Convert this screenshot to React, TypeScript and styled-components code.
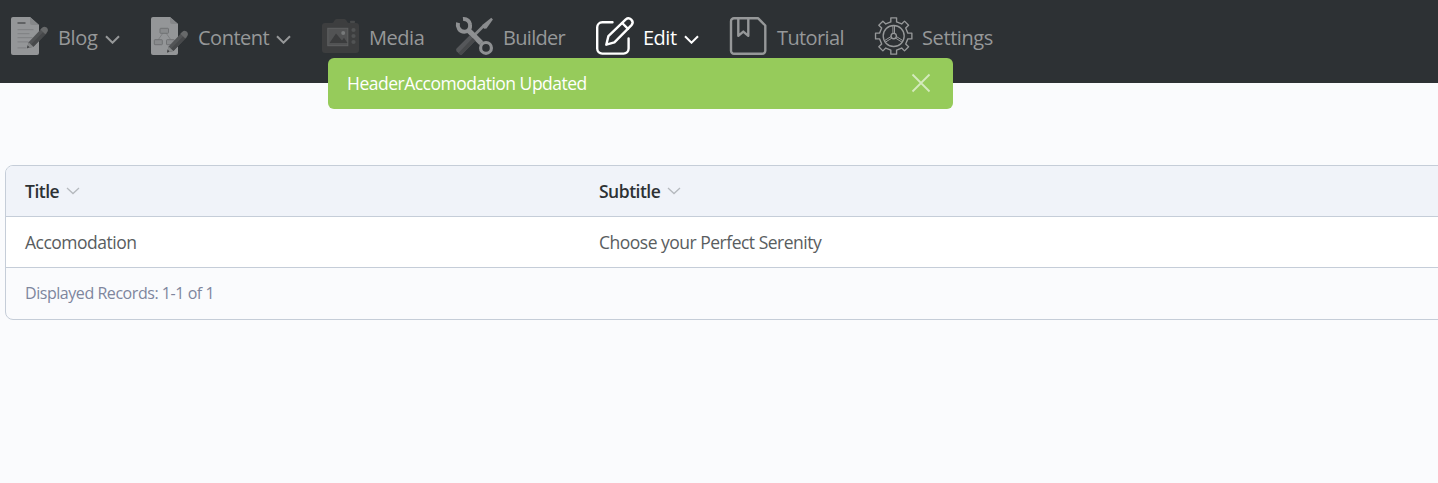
import React from "react";
import styled, { createGlobalStyle } from "styled-components";

const GlobalStyle = createGlobalStyle`
  * { box-sizing: border-box; }
  html, body { margin: 0; height: 100%; overflow: hidden; background: #fafbfd; }
  body { font-family: "Segoe UI", "Open Sans", "Noto Sans", sans-serif; color: #555; }
`;

const Page = styled.div`
  position: relative;
  height: 483px;
  overflow: hidden;
`;

const Navbar = styled.nav`
  display: flex;
  gap: 30px;
  height: 83px;
  padding: 17px 0 0 10px;
  background: #2d3134;
`;

const NavItem = styled.a<{ $active?: boolean }>`
  display: flex;
  align-items: center;
  height: 38px;
  flex: none;
  color: ${(p) => (p.$active ? "#ffffff" : "#969899")};
`;

const NavLabel = styled.span<{ $width: number; $tracking: number }>`
  width: ${(p) => p.$width}px;
  margin-left: 10px;
  padding-top: 4px;
  font-size: 20px;
  line-height: 28px;
  letter-spacing: ${(p) => p.$tracking}px;
  white-space: nowrap;
`;

const NavIcon = styled.svg`
  width: 38px;
  height: 38px;
  flex: none;
  overflow: visible;
`;

const NavCaret = styled.svg`
  width: 15px;
  height: 9px;
  margin: 6px 0 0 6px;
  fill: none;
  stroke: currentColor;
  stroke-width: 2;
`;

const Toast = styled.div`
  position: absolute;
  top: 58px;
  left: 328px;
  display: flex;
  align-items: center;
  justify-content: space-between;
  width: 625px;
  height: 51px;
  padding: 0 22px 2px 19px;
  border-radius: 6px;
  background: #96cb5b;
  color: #fff;
`;

const Text = styled.span<{ $tracking: number; $size?: number; $weight?: number }>`
  font-size: ${(p) => p.$size ?? 17.5}px;
  font-weight: ${(p) => p.$weight ?? 400};
  letter-spacing: ${(p) => p.$tracking}px;
  line-height: 26px;
  white-space: nowrap;
`;

const CloseIcon = styled.svg`
  width: 20px;
  height: 20px;
  stroke: #d5eabd;
  stroke-width: 1.8;
`;

const Table = styled.section`
  width: 1450px;
  height: 155px;
  margin: 82px 0 0 5px;
  border: 1px solid #c5cdd8;
  border-radius: 8px;
  overflow: hidden;
`;

const Row = styled.div<{ $header?: boolean }>`
  display: grid;
  grid-template-columns: 574px 1fr;
  align-items: center;
  height: 51px;
  padding-left: 19px;
  border-bottom: 1px solid #c5cdd8;
  background: ${(p) => (p.$header ? "#f0f3f9" : "#ffffff")};
  color: ${(p) => (p.$header ? "#2d3134" : "#595d60")};
`;

const HeadCell = styled.div`
  display: flex;
  align-items: center;
`;

const SortCaret = styled.svg`
  width: 14px;
  height: 8px;
  margin-left: 7px;
  fill: none;
  stroke: #b5b9be;
  stroke-width: 1.3;
`;

const Footer = styled.div`
  display: flex;
  align-items: center;
  height: 51px;
  padding: 0 0 2px 19px;
  color: #7e869d;
`;

const Caret = () => (
  <NavCaret viewBox="0 0 15 9">
    <path d="M1 1.2 7.5 7.7 14 1.2" />
  </NavCaret>
);

const Sort = () => (
  <SortCaret viewBox="0 0 14 8">
    <path d="M1 1 7 6.5 13 1" />
  </SortCaret>
);

const Pencil = () => (
  <g>
    <path d="m17 32 1.6-6L31.8 12l5 4.7-13.4 13.8Z" fill="#525456" />
    <path d="m21 28.4 13.4-13.9 2.4 2.2-13.4 13.8Z" fill="#47494b" />
    <path d="m17 32 1.6-6 4.8 4.5Z" fill="#858788" />
    <path d="m17 32 .7-2.8 1.8 1.8Z" fill="#3b3d3f" />
    <path d="m30.4 13.4 2-2.1c2.8-2.7 7.4 1.5 4.8 4.5l-1.9 2.2Z" fill="#67696a" />
  </g>
);

const BlogIcon = () => (
  <NavIcon viewBox="0 0 38 38">
    <path d="M3 0h17l9 8v28a2 2 0 0 1-2 2H3a2 2 0 0 1-2-2V2a2 2 0 0 1 2-2Z" fill="#949698" />
    <path d="M20 0v6a2 2 0 0 0 2 2h7Z" fill="#858789" />
    <path d="M7.5 6h8" stroke="#57595b" strokeWidth="1.7" />
    <path d="M7.5 12.6h16M7.5 16.6h12M7.5 20.7h15M7.5 24.8h11M7.5 30.8h9" stroke="#828486" strokeWidth="1.3" />
    <g transform="translate(0 -.8)"><Pencil /></g>
  </NavIcon>
);

const ContentIcon = () => (
  <NavIcon viewBox="0 0 38 38">
    <path d="M3 0h17l8 7v29a2 2 0 0 1-2 2H3a2 2 0 0 1-2-2V2a2 2 0 0 1 2-2Z" fill="#949698" />
    <path d="M20 0v5a2 2 0 0 0 2 2h6Z" fill="#858789" />
    <path d="m13 16-5 7m8-7 5 7" stroke="#7d7f81" fill="none" />
    <g fill="#898b8d" stroke="#707274" strokeWidth="1">
      <rect x="10" y="11.3" width="8.5" height="5" rx=".7" />
      <rect x="4.3" y="22.7" width="8" height="5" rx=".7" />
      <rect x="16.5" y="22.7" width="8" height="5" rx=".7" />
    </g>
    <g transform="translate(0 3.4)"><Pencil /></g>
  </NavIcon>
);

const MediaIcon = () => (
  <NavIcon viewBox="0 0 38 38">
    <path d="M4 6h7c2 0 2.4-4 4.5-4h8c2 0 2.5 4 4.5 4h7a3 3 0 0 1 3 3v24a3 3 0 0 1-3 3H4a3 3 0 0 1-3-3V9a3 3 0 0 1 3-3Z" fill="#3d3e3f" />
    <rect x="29" y="3.8" width="5" height="2.2" rx=".8" fill="#484a4b" />
    <rect x="6.8" y="11.3" width="20" height="17.4" fill="#525354" stroke="#606162" />
    <path d="m8.5 26 6.5-9.5 6 7 2-2.8 3.5 5.3Z" fill="#3b3c3d" />
    <circle cx="22.2" cy="16" r="2" fill="#77797a" />
    <g fill="#515354"><circle cx="32.5" cy="13" r="2.1" /><circle cx="32.5" cy="19" r="2.1" /><circle cx="32.5" cy="25" r="2.1" /></g>
  </NavIcon>
);

const BuilderIcon = () => (
  <NavIcon viewBox="0 0 38 38" fill="none">
    <path d="m17 20.5 12-12" stroke="#858789" strokeWidth="2.8" />
    <path d="M27.6 7.8 36.3.8l1.6 1.6-6.4 9.2-2.3.1-1.8-1.7Z" fill="#8a8c8e" />
    <path d="M3 5.8C2 10 4.6 14.7 9.3 14.7c4 0 6.3-3 5.8-7.2C14.8 4.3 12 1.7 8 2.1" stroke="#8e9092" strokeWidth="4" />
    <path d="m12.5 12.3 13.8 13.8" stroke="#8e9092" strokeWidth="5.4" />
    <circle cx="31" cy="30.9" r="5.4" stroke="#8e9092" strokeWidth="3.2" />
    <path d="m14.8 18.2 5.5 5.5L7.2 37.2a2 2 0 0 1-2.6 0l-3-3a2 2 0 0 1 0-2.7Z" fill="#55575a" />
    <path d="m17.7 21.1 2.6 2.6L7.2 37.2a2 2 0 0 1-2.6 0l-1.1-1.1Z" fill="#47494b" />
  </NavIcon>
);

const EditIcon = () => (
  <NavIcon viewBox="0 0 38 38" fill="none" stroke="currentColor" strokeWidth="2.4" strokeLinecap="round" strokeLinejoin="round">
    <path d="M17.5 5.3H7.2A5 5 0 0 0 2.2 10.3v21.3a5 5 0 0 0 5 5h21.4a5 5 0 0 0 5-5V21.5" />
    <path d="m11.3 27.7 2.1-8.6L30.8 2.4c3.7-3.2 9 2 5.7 5.7L19.4 25.4Z" />
    <path d="m27.2 6 5.8 5.8" />
  </NavIcon>
);

const TutorialIcon = () => (
  <NavIcon viewBox="0 0 38 38" fill="none" stroke="currentColor" strokeWidth="2.4" strokeLinejoin="round">
    <path d="M5 1.3h24.2l7.1 7.2v25.2a3 3 0 0 1-3 3H5a3 3 0 0 1-3-3V4.3a3 3 0 0 1 3-3Z" />
    <path d="M9.3 1.3v17.5l5-4.2 5 4.2V1.3" />
  </NavIcon>
);

// Eight-toothed outline: root and tip corners for every 45 degree step.
const gearPoints = Array.from({ length: 8 }, (_, tooth) =>
  [
    [-11.5, 14.4],
    [-9, 18.4],
    [9, 18.4],
    [11.5, 14.4],
  ].map(([offset, radius]) => {
    const angle = ((tooth * 45 + offset) * Math.PI) / 180;
    return `${(19.7 + radius * Math.sin(angle)).toFixed(2)},${(19 - radius * Math.cos(angle)).toFixed(2)}`;
  })
)
  .flat()
  .join(" ");

const SettingsIcon = () => (
  <NavIcon viewBox="0 0 38 38" fill="none" stroke="currentColor" strokeWidth="1.35" strokeLinejoin="round">
    <polygon points={gearPoints} />
    <circle cx="19.7" cy="19" r="10.5" />
    <circle cx="19.7" cy="19" r="2.7" />
    <path d="M18.9 8.7v7.6M20.5 8.7v7.6M16.9 19.6l-6.4 4M17.9 21.1l-6.4 4M22.5 19.6l6.4 4M21.5 21.1l6.4 4" strokeWidth="1" />
  </NavIcon>
);

const items = [
  { label: "Blog", icon: BlogIcon, width: 41, tracking: -0.3, menu: true },
  { label: "Content", icon: ContentIcon, width: 72, tracking: -0.5, menu: true },
  { label: "Media", icon: MediaIcon, width: 56, tracking: -0.45 },
  { label: "Builder", icon: BuilderIcon, width: 62, tracking: -0.7 },
  { label: "Edit", icon: EditIcon, width: 35, tracking: -0.5, menu: true, active: true },
  { label: "Tutorial", icon: TutorialIcon, width: 67, tracking: -0.6 },
  { label: "Settings", icon: SettingsIcon, width: 72, tracking: -0.4 },
];

export default function App() {
  return (
    <Page>
      <GlobalStyle />
      <Navbar>
        {items.map(({ label, icon: Icon, width, tracking, menu, active }) => (
          <NavItem key={label} $active={active}>
            <Icon />
            <NavLabel $width={width} $tracking={tracking}>{label}</NavLabel>
            {menu && <Caret />}
          </NavItem>
        ))}
      </Navbar>
      <Toast role="status">
        <Text $tracking={-0.5}>HeaderAccomodation Updated</Text>
        <CloseIcon viewBox="0 0 20 20"><path d="m1.5 1.5 17 17m0-17-17 17" /></CloseIcon>
      </Toast>
      <Table>
        <Row $header>
          <HeadCell><Text $weight={600} $tracking={-0.5}>Title</Text><Sort /></HeadCell>
          <HeadCell><Text $weight={600} $tracking={-0.5}>Subtitle</Text><Sort /></HeadCell>
        </Row>
        <Row>
          <Text $tracking={-0.5}>Accomodation</Text>
          <Text $tracking={-0.5}>Choose your Perfect Serenity</Text>
        </Row>
        <Footer><Text $size={16} $tracking={-0.45}>Displayed Records: 1-1 of 1</Text></Footer>
      </Table>
    </Page>
  );
}
